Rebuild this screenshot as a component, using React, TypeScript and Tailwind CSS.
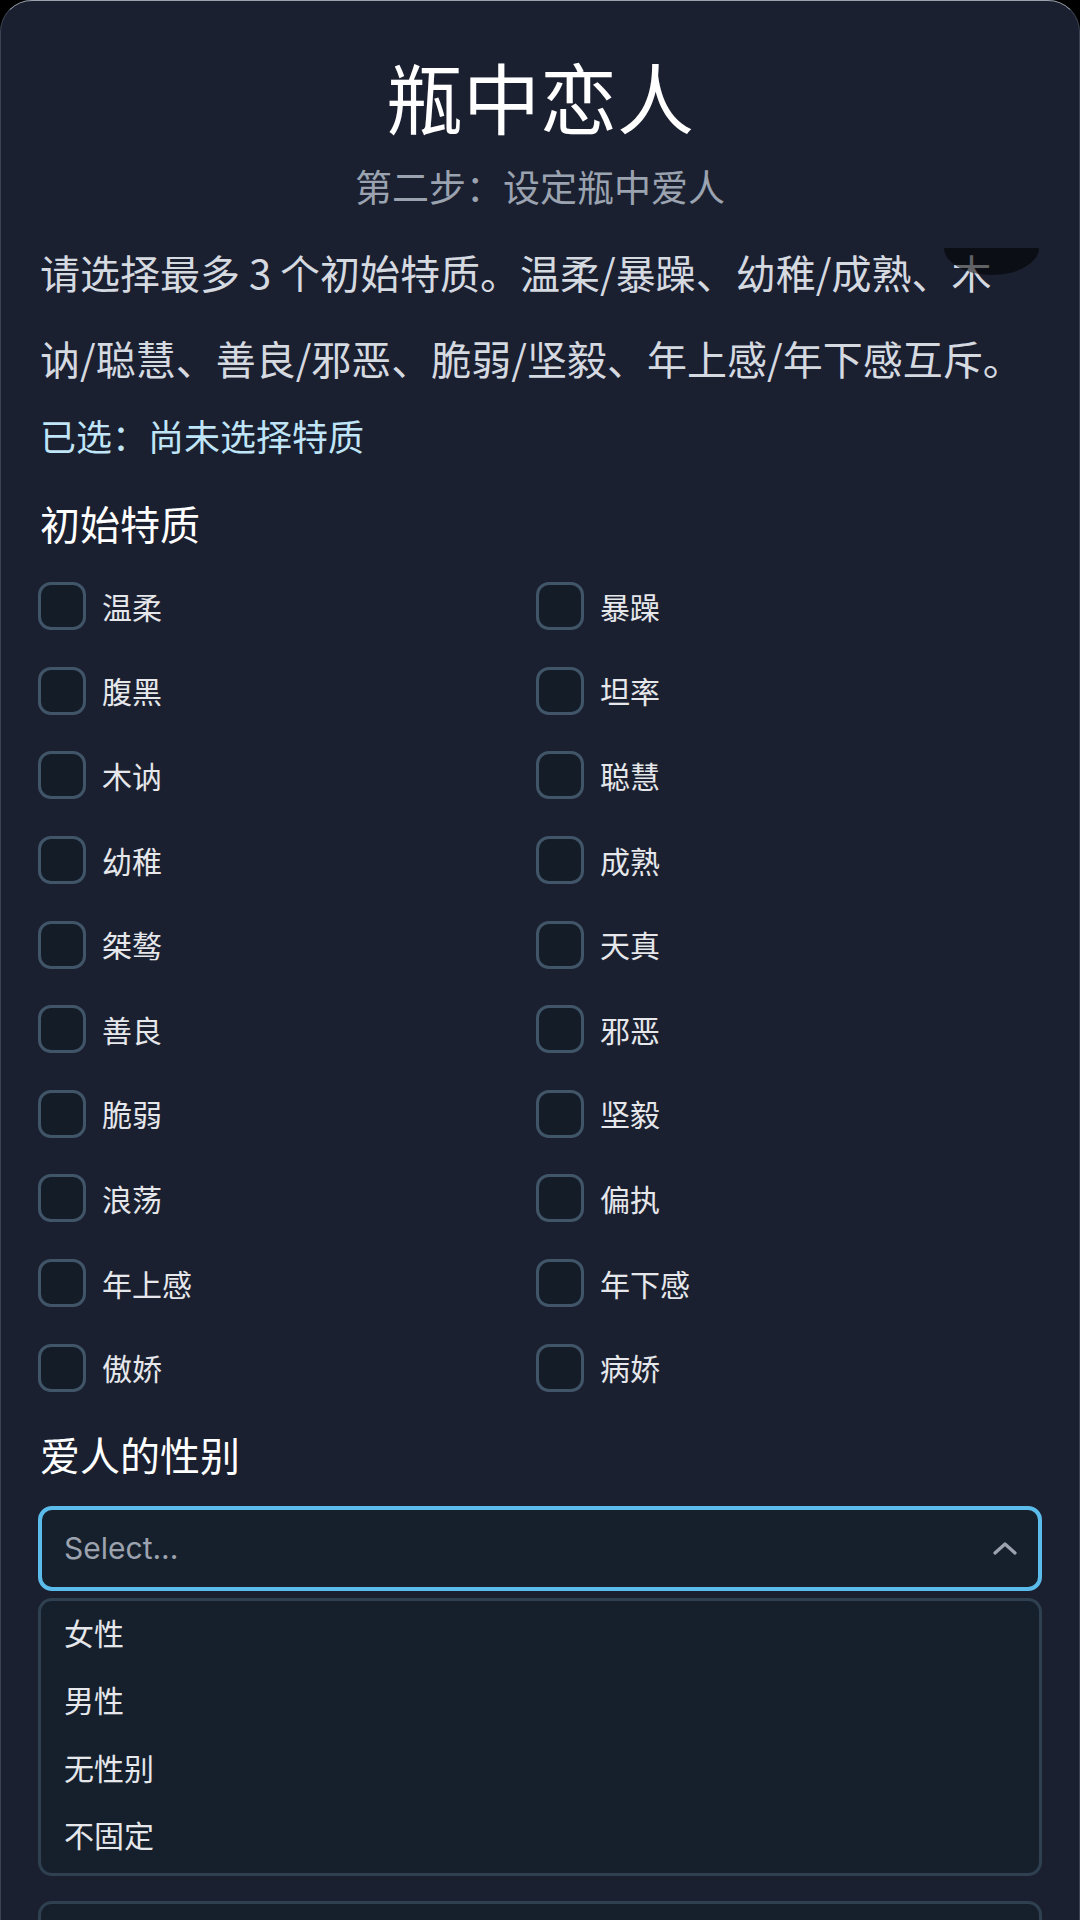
const traits: [string, string][] = [
  ["温柔", "暴躁"],
  ["腹黑", "坦率"],
  ["木讷", "聪慧"],
  ["幼稚", "成熟"],
  ["桀骜", "天真"],
  ["善良", "邪恶"],
  ["脆弱", "坚毅"],
  ["浪荡", "偏执"],
  ["年上感", "年下感"],
  ["傲娇", "病娇"],
];

const genders = ["女性", "男性", "无性别", "不固定"];

function Trait({ label }: { label: string }) {
  return (
    <label className="flex items-center gap-4 h-[84.6px]">
      <span className="w-12 h-12 rounded-[13px] border-[3px] border-[#415569] bg-[#141c27]" />
      <span className="text-[30px] text-[#e5e7eb]">{label}</span>
    </label>
  );
}

export default function App() {
  return (
    <div
      className="min-h-screen bg-black"
      style={{ fontFamily: '"Noto Sans CJK SC", "Noto Sans", sans-serif' }}
    >
      <div className="relative h-[1920px] overflow-hidden rounded-t-[32px] border-x border-t border-x-[#3b4250] border-t-[#9ca3af] bg-[#1b2030] px-[37px]">
        <h1 className="pt-[51px] text-center text-[77px] leading-[88px] text-white">
          瓶中恋人
        </h1>
        <p className="mt-[24px] text-center text-[37px] leading-[44px] text-[#9aa3af]">
          第二步：设定瓶中爱人
        </p>

        <p className="mt-[21px] pl-[2px] text-[40px] leading-[86px] text-[#d5d9e0]">
          请选择最多 3 个初始特质。温柔/暴躁、幼稚/成熟、木
          <br />
          讷/聪慧、善良/邪恶、脆弱/坚毅、年上感/年下感互斥。
        </p>
        <div className="absolute left-[943px] top-[247px] w-[95px] h-[27px] rounded-b-[50%_100%] bg-black/55" />

        <p className="mt-[12px] pl-[2px] text-[36px] leading-[44px] text-[#bfe5f7]">
          已选：尚未选择特质
        </p>

        <h2 className="mt-[42px] pl-[2px] text-[40px] leading-[48px] text-white">初始特质</h2>
        <div className="mt-[17px] grid grid-cols-[498px_1fr]">
          {traits.map(([a, b]) => (
            <>
              <Trait key={a} label={a} />
              <Trait key={b} label={b} />
            </>
          ))}
        </div>

        <h2 className="mt-[20px] pl-[2px] text-[40px] leading-[48px] text-white">爱人的性别</h2>

        <div className="mt-[28px] h-[85px] flex items-center justify-between rounded-[14px] border-4 border-[#5bbcec] bg-[#16202d] pl-[22px] pr-[21px]">
          <span className="text-[30px] text-[#9ca3af]" style={{ fontFamily: "Inter, sans-serif" }}>
            Select...
          </span>
          <svg width="24" height="14" viewBox="0 0 24 14" fill="none">
            <polyline
              points="2,12 12,3 22,12"
              stroke="#9ca3af"
              strokeWidth="3.2"
              strokeLinecap="round"
              strokeLinejoin="round"
            />
          </svg>
        </div>

        <ul className="mt-[7px] rounded-[14px] border-[3px] border-[#2f4050] bg-[#16202d] py-[1px] pl-[23px]">
          {genders.map((g) => (
            <li key={g} className="h-[67.5px] pb-[7px] flex items-center text-[30px] text-[#e5e7eb]">
              {g}
            </li>
          ))}
        </ul>

        <div className="mt-[25px] h-[200px] rounded-t-[14px] border-[3px] border-[#2f4050] bg-[#16202d]" />
      </div>
    </div>
  );
}
